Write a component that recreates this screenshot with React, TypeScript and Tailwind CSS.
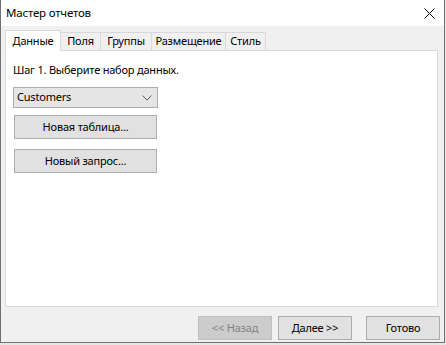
import React from "react";

const font = { fontFamily: '"Noto Sans", "Open Sans", sans-serif' };

function Tab({ label, w, active }: { label: string; w: string; active?: boolean }) {
  if (active) {
    return (
      <div
        className={`${w} h-[21px] -mb-px relative z-10 bg-white border border-b-0 border-[#d9d9d9] flex items-center justify-center`}
      >
        {label}
      </div>
    );
  }
  return (
    <div
      className={`${w} h-[18px] -ml-px bg-[#f0f0f0] border border-b-0 border-[#d9d9d9] flex items-center justify-center`}
    >
      {label}
    </div>
  );
}

function Btn({ children, w, disabled }: { children: React.ReactNode; w: string; disabled?: boolean }) {
  return (
    <div
      className={`${w} h-[24px] flex items-center justify-center border ${
        disabled
          ? "bg-[#cccccc] border-[#bfbfbf] text-[#838383]"
          : "bg-[#e1e1e1] border-[#adadad] text-black"
      }`}
    >
      {children}
    </div>
  );
}

export default function App() {
  return (
    <div
      className="w-[446px] h-[345px] bg-[#e6e6e6] overflow-hidden text-[11px] tracking-[-0.2px] text-black"
      style={font}
    >
      <div className="w-[445px] h-[343px] border-l border-r border-b border-[#707070] bg-[#f0f0f0] flex flex-col">
        {/* Title bar */}
        <div className="h-[26px] bg-white flex items-center justify-between pl-[5px] pr-[9px] shrink-0">
          <span className="text-[11.5px] leading-none">Мастер отчетов</span>
          <svg width="11" height="11" viewBox="0 0 11 11">
            <path d="M0.5 0.5 L10.5 10.5 M10.5 0.5 L0.5 10.5" stroke="#000" strokeWidth="1" />
          </svg>
        </div>

        {/* Tabs */}
        <div className="flex items-end pl-[4px] mt-[4px]">
          <Tab label="Данные" w="w-[56px]" active />
          <Tab label="Поля" w="w-[41px]" />
          <Tab label="Группы" w="w-[52px]" />
          <Tab label="Размещение" w="w-[75px]" />
          <Tab label="Стиль" w="w-[41px]" />
        </div>

        {/* Panel */}
        <div className="ml-[4px] w-[433px] h-[257px] bg-white border border-[#d9d9d9] flex flex-col pl-[7px] pt-[11px]">
          <div className="leading-[16px]">Шаг 1. Выберите набор данных.</div>
          <div className="mt-[9px] w-[145px] h-[21px] bg-[#e5e5e5] border border-[#adadad] flex items-center justify-between pl-[3px] pr-[5px]">
            <span>Customers</span>
            <svg width="10" height="6" viewBox="0 0 10 6">
              <polyline points="0.5,0.5 5,5 9.5,0.5" fill="none" stroke="#606060" strokeWidth="1" />
            </svg>
          </div>
          <div className="mt-[7px] ml-px">
            <Btn w="w-[143px]">Новая таблица...</Btn>
          </div>
          <div className="mt-[10px] ml-px">
            <Btn w="w-[143px]">Новый запрос...</Btn>
          </div>
        </div>

        {/* Bottom buttons */}
        <div className="flex justify-end gap-[6px] pr-[4px] mt-[9px]">
          <Btn w="w-[74px]" disabled>
            &lt;&lt; Назад
          </Btn>
          <div className="mr-[8px]">
            <Btn w="w-[74px]">Далее &gt;&gt;</Btn>
          </div>
          <Btn w="w-[74px]">Готово</Btn>
        </div>
      </div>
    </div>
  );
}
